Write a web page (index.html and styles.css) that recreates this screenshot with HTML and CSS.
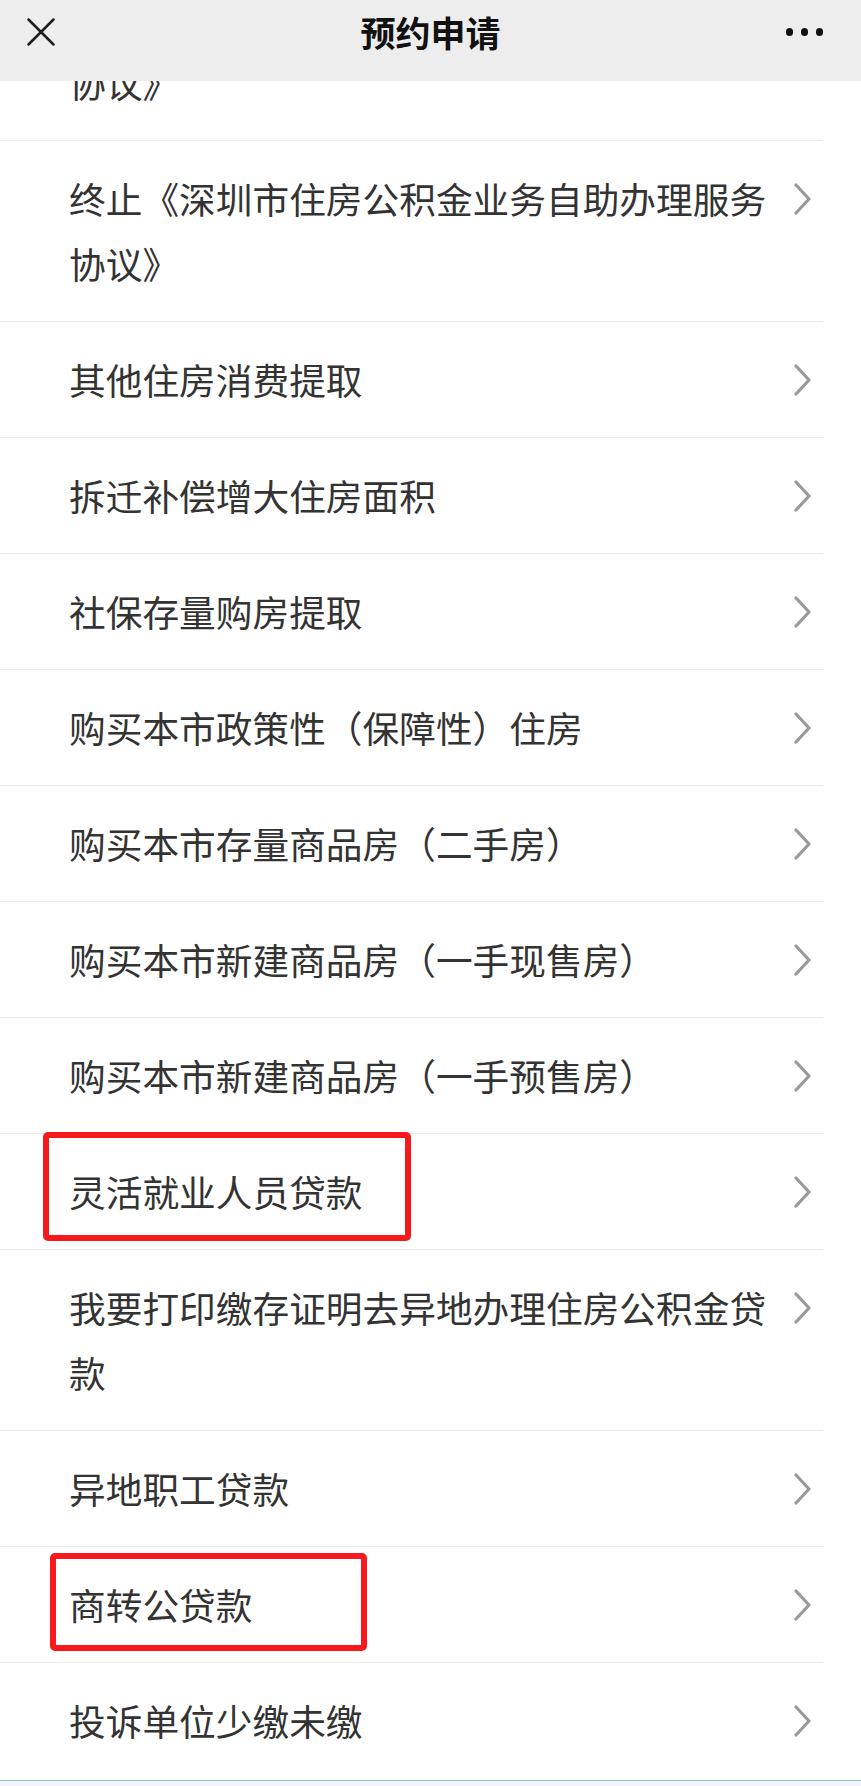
FILE: index.html
```html
<!DOCTYPE html>
<html lang="zh-CN">
<head>
<meta charset="utf-8">
<title>预约申请</title>
<link rel="stylesheet" href="styles.css">
</head>
<body>
<header class="navbar">
  <div class="nav-left">
    <svg class="icon-close" width="28" height="28" viewBox="0 0 28 28"><path d="M1.5 1.5 L26.5 26.5 M26.5 1.5 L1.5 26.5" stroke="#1e1e1e" stroke-width="2.5" fill="none" stroke-linecap="round"/></svg>
  </div>
  <div class="nav-title">预约申请</div>
  <div class="nav-right">
    <span class="dot"></span><span class="dot"></span><span class="dot"></span>
  </div>
</header>

<main class="list">
  <div class="cell cell-partial"><div class="cell-text">协议》</div></div>
  <div class="cell"><div class="cell-text">终止《深圳市住房公积金业务自助办理服务协议》</div><svg class="chev" width="17" height="32" viewBox="0 0 17 32"><path d="M2 2 L15 16 L2 30" /></svg></div>
  <div class="cell"><div class="cell-text">其他住房消费提取</div><svg class="chev" width="17" height="32" viewBox="0 0 17 32"><path d="M2 2 L15 16 L2 30" /></svg></div>
  <div class="cell"><div class="cell-text">拆迁补偿增大住房面积</div><svg class="chev" width="17" height="32" viewBox="0 0 17 32"><path d="M2 2 L15 16 L2 30" /></svg></div>
  <div class="cell"><div class="cell-text">社保存量购房提取</div><svg class="chev" width="17" height="32" viewBox="0 0 17 32"><path d="M2 2 L15 16 L2 30" /></svg></div>
  <div class="cell"><div class="cell-text">购买本市政策性（保障性）住房</div><svg class="chev" width="17" height="32" viewBox="0 0 17 32"><path d="M2 2 L15 16 L2 30" /></svg></div>
  <div class="cell"><div class="cell-text">购买本市存量商品房（二手房）</div><svg class="chev" width="17" height="32" viewBox="0 0 17 32"><path d="M2 2 L15 16 L2 30" /></svg></div>
  <div class="cell"><div class="cell-text">购买本市新建商品房（一手现售房）</div><svg class="chev" width="17" height="32" viewBox="0 0 17 32"><path d="M2 2 L15 16 L2 30" /></svg></div>
  <div class="cell"><div class="cell-text">购买本市新建商品房（一手预售房）</div><svg class="chev" width="17" height="32" viewBox="0 0 17 32"><path d="M2 2 L15 16 L2 30" /></svg></div>
  <div class="cell"><div class="cell-text">灵活就业人员贷款</div><svg class="chev" width="17" height="32" viewBox="0 0 17 32"><path d="M2 2 L15 16 L2 30" /></svg><span class="mark mark-1"></span></div>
  <div class="cell"><div class="cell-text">我要打印缴存证明去异地办理住房公积金贷款</div><svg class="chev" width="17" height="32" viewBox="0 0 17 32"><path d="M2 2 L15 16 L2 30" /></svg></div>
  <div class="cell"><div class="cell-text">异地职工贷款</div><svg class="chev" width="17" height="32" viewBox="0 0 17 32"><path d="M2 2 L15 16 L2 30" /></svg></div>
  <div class="cell"><div class="cell-text">商转公贷款</div><svg class="chev" width="17" height="32" viewBox="0 0 17 32"><path d="M2 2 L15 16 L2 30" /></svg><span class="mark mark-2"></span></div>
  <div class="cell cell-last"><div class="cell-text">投诉单位少缴未缴</div><svg class="chev" width="17" height="32" viewBox="0 0 17 32"><path d="M2 2 L15 16 L2 30" /></svg></div>
</main>
<div class="bottom-bar"></div>
</body>
</html>
```
FILE: styles.css
```css
html, body {
  margin: 0;
  padding: 0;
  background: #ffffff;
}
body {
  font-family: "Noto Sans CJK SC", "Noto Sans", sans-serif;
  color: #333333;
  width: 861px;
  overflow: hidden;
}

.navbar {
  position: fixed;
  top: 0;
  left: 0;
  right: 0;
  height: 81px;
  box-sizing: border-box;
  padding-bottom: 17px;
  background: #ededed;
  display: grid;
  grid-template-columns: 1fr auto 1fr;
  align-items: center;
  z-index: 10;
}
.nav-left {
  padding-left: 27px;
  display: flex;
  align-items: center;
}
.icon-close {
  display: block;
}
.nav-title {
  font-size: 35px;
  font-weight: 600;
  color: #111111;
  line-height: 40px;
}
.nav-right {
  justify-self: end;
  padding-right: 38px;
  display: flex;
  gap: 7.5px;
  align-items: center;
}
.dot {
  width: 7.5px;
  height: 7.5px;
  border-radius: 50%;
  background: #111111;
}

.list {
  margin-right: 38px;
  padding-top: 25px;
}
.cell {
  position: relative;
  display: flex;
  align-items: flex-start;
  padding: 25px 12px 25px 69px;
  border-bottom: 1px solid #ececec;
}
.cell-last {
  border-bottom: none;
  padding-bottom: 27px;
}
.cell-text {
  flex: 1;
  font-size: 36.7px;
  line-height: 65px;
  color: #333333;
}
.chev {
  flex: none;
  margin-left: 14px;
  margin-top: 16.5px;
  display: block;
}
.chev path {
  fill: none;
  stroke: #999999;
  stroke-width: 3.2;
  stroke-linecap: round;
  stroke-linejoin: round;
}

.mark {
  position: absolute;
  box-sizing: border-box;
  border: 6px solid #f7191c;
  border-radius: 5px;
}
.mark-1 {
  left: 43px;
  top: -2px;
  width: 368px;
  height: 109px;
}
.mark-2 {
  left: 50px;
  top: 6px;
  width: 317px;
  height: 98px;
}

.bottom-bar {
  border-top: 1px solid #83cbbf;
  background: #f5f1f8;
  height: 20px;
}
```
